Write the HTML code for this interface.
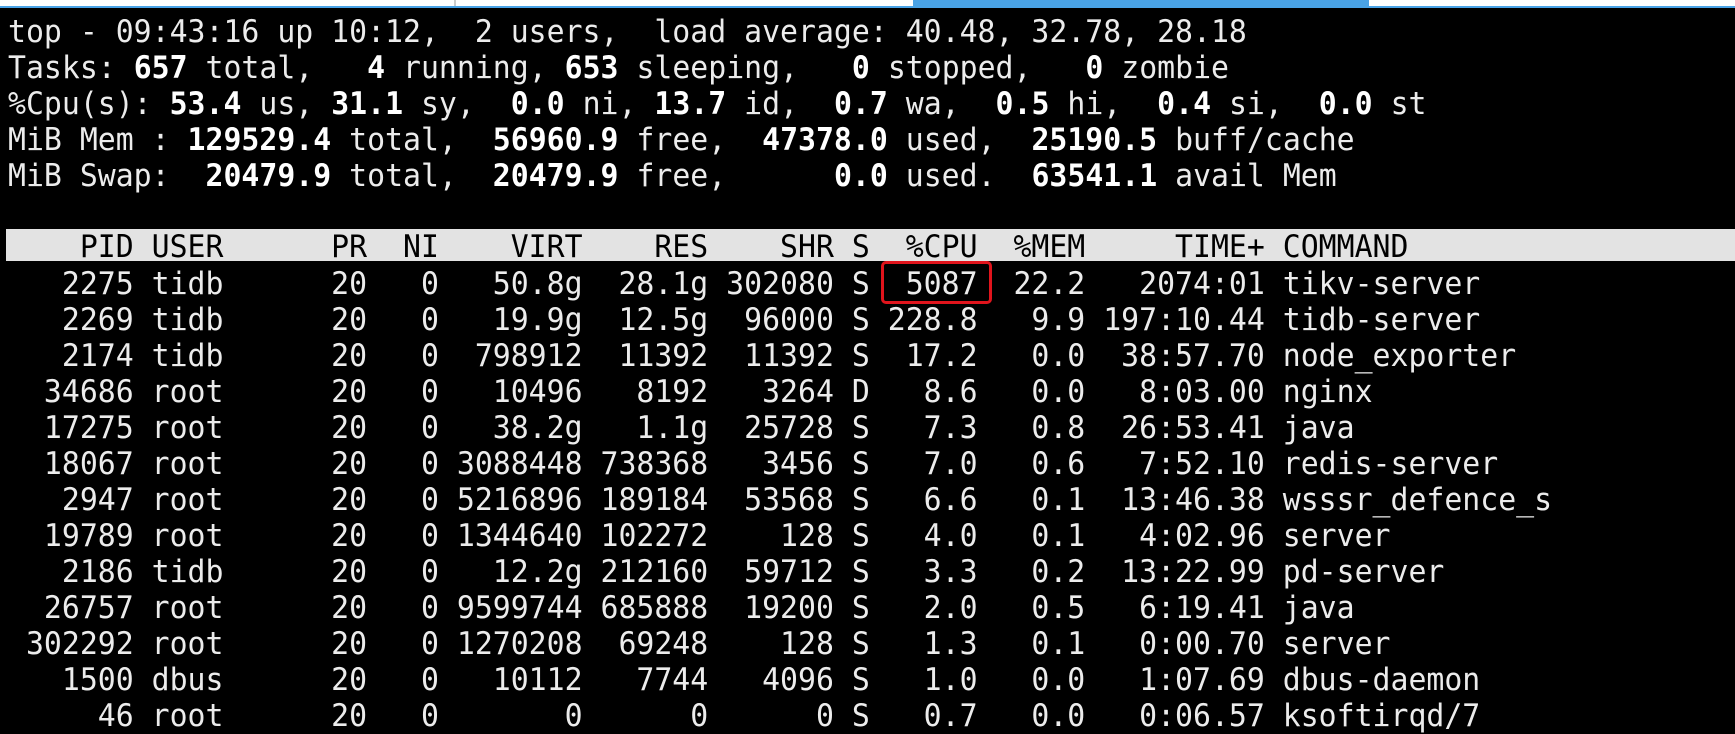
<!DOCTYPE html>
<html><head><meta charset="utf-8"><style>
html,body{margin:0;padding:0;background:#000;width:1735px;height:715px;overflow:hidden}
.top{position:absolute;left:0;top:0;width:1735px;height:6px;background:#fff}
.blue{position:absolute;left:0;top:6px;width:1735px;height:2px;background:#4aa3e6}
.tab{position:absolute;left:913px;top:0;width:456px;height:8px;background:#4aa3e6}
.div{position:absolute;left:454px;top:0;width:2px;height:6px;background:#ccc}
pre{position:absolute;left:8px;margin:0;font-family:"DejaVu Sans Mono","Liberation Mono",monospace;font-size:31px;line-height:36px;color:#ececec;white-space:pre;transform:scaleX(0.962);transform-origin:0 0}
b{font-weight:bold;color:#fff}
.hdr{position:absolute;left:6px;top:229px;width:1729px;height:32px;background:#e3e3e3}
.box{position:absolute;left:881px;top:261px;width:105px;height:37px;border:3px solid #e0141c;border-radius:5px}
</style></head><body>
<div class="top"></div><div class="blue"></div><div class="tab"></div><div class="div"></div>
<pre style="top:14px">top - 09:43:16 up 10:12,  2 users,  load average: 40.48, 32.78, 28.18
Tasks: <b>657</b> total,   <b>4</b> running, <b>653</b> sleeping,   <b>0</b> stopped,   <b>0</b> zombie
%Cpu(s): <b>53.4</b> us, <b>31.1</b> sy,  <b>0.0</b> ni, <b>13.7</b> id,  <b>0.7</b> wa,  <b>0.5</b> hi,  <b>0.4</b> si,  <b>0.0</b> st
MiB Mem : <b>129529.4</b> total,  <b>56960.9</b> free,  <b>47378.0</b> used,  <b>25190.5</b> buff/cache
MiB Swap:  <b>20479.9</b> total,  <b>20479.9</b> free,      <b>0.0</b> used.  <b>63541.1</b> avail Mem</pre>
<div class="hdr"></div>
<pre style="top:229px;color:#000">    PID USER      PR  NI    VIRT    RES    SHR S  %CPU  %MEM     TIME+ COMMAND</pre>
<pre style="top:266px">   2275 tidb      20   0   50.8g  28.1g 302080 S  5087  22.2   2074:01 tikv-server
   2269 tidb      20   0   19.9g  12.5g  96000 S 228.8   9.9 197:10.44 tidb-server
   2174 tidb      20   0  798912  11392  11392 S  17.2   0.0  38:57.70 node_exporter
  34686 root      20   0   10496   8192   3264 D   8.6   0.0   8:03.00 nginx
  17275 root      20   0   38.2g   1.1g  25728 S   7.3   0.8  26:53.41 java
  18067 root      20   0 3088448 738368   3456 S   7.0   0.6   7:52.10 redis-server
   2947 root      20   0 5216896 189184  53568 S   6.6   0.1  13:46.38 wsssr_defence_s
  19789 root      20   0 1344640 102272    128 S   4.0   0.1   4:02.96 server
   2186 tidb      20   0   12.2g 212160  59712 S   3.3   0.2  13:22.99 pd-server
  26757 root      20   0 9599744 685888  19200 S   2.0   0.5   6:19.41 java
 302292 root      20   0 1270208  69248    128 S   1.3   0.1   0:00.70 server
   1500 dbus      20   0   10112   7744   4096 S   1.0   0.0   1:07.69 dbus-daemon
     46 root      20   0       0      0      0 S   0.7   0.0   0:06.57 ksoftirqd/7</pre>
<div class="box"></div>
</body></html>
